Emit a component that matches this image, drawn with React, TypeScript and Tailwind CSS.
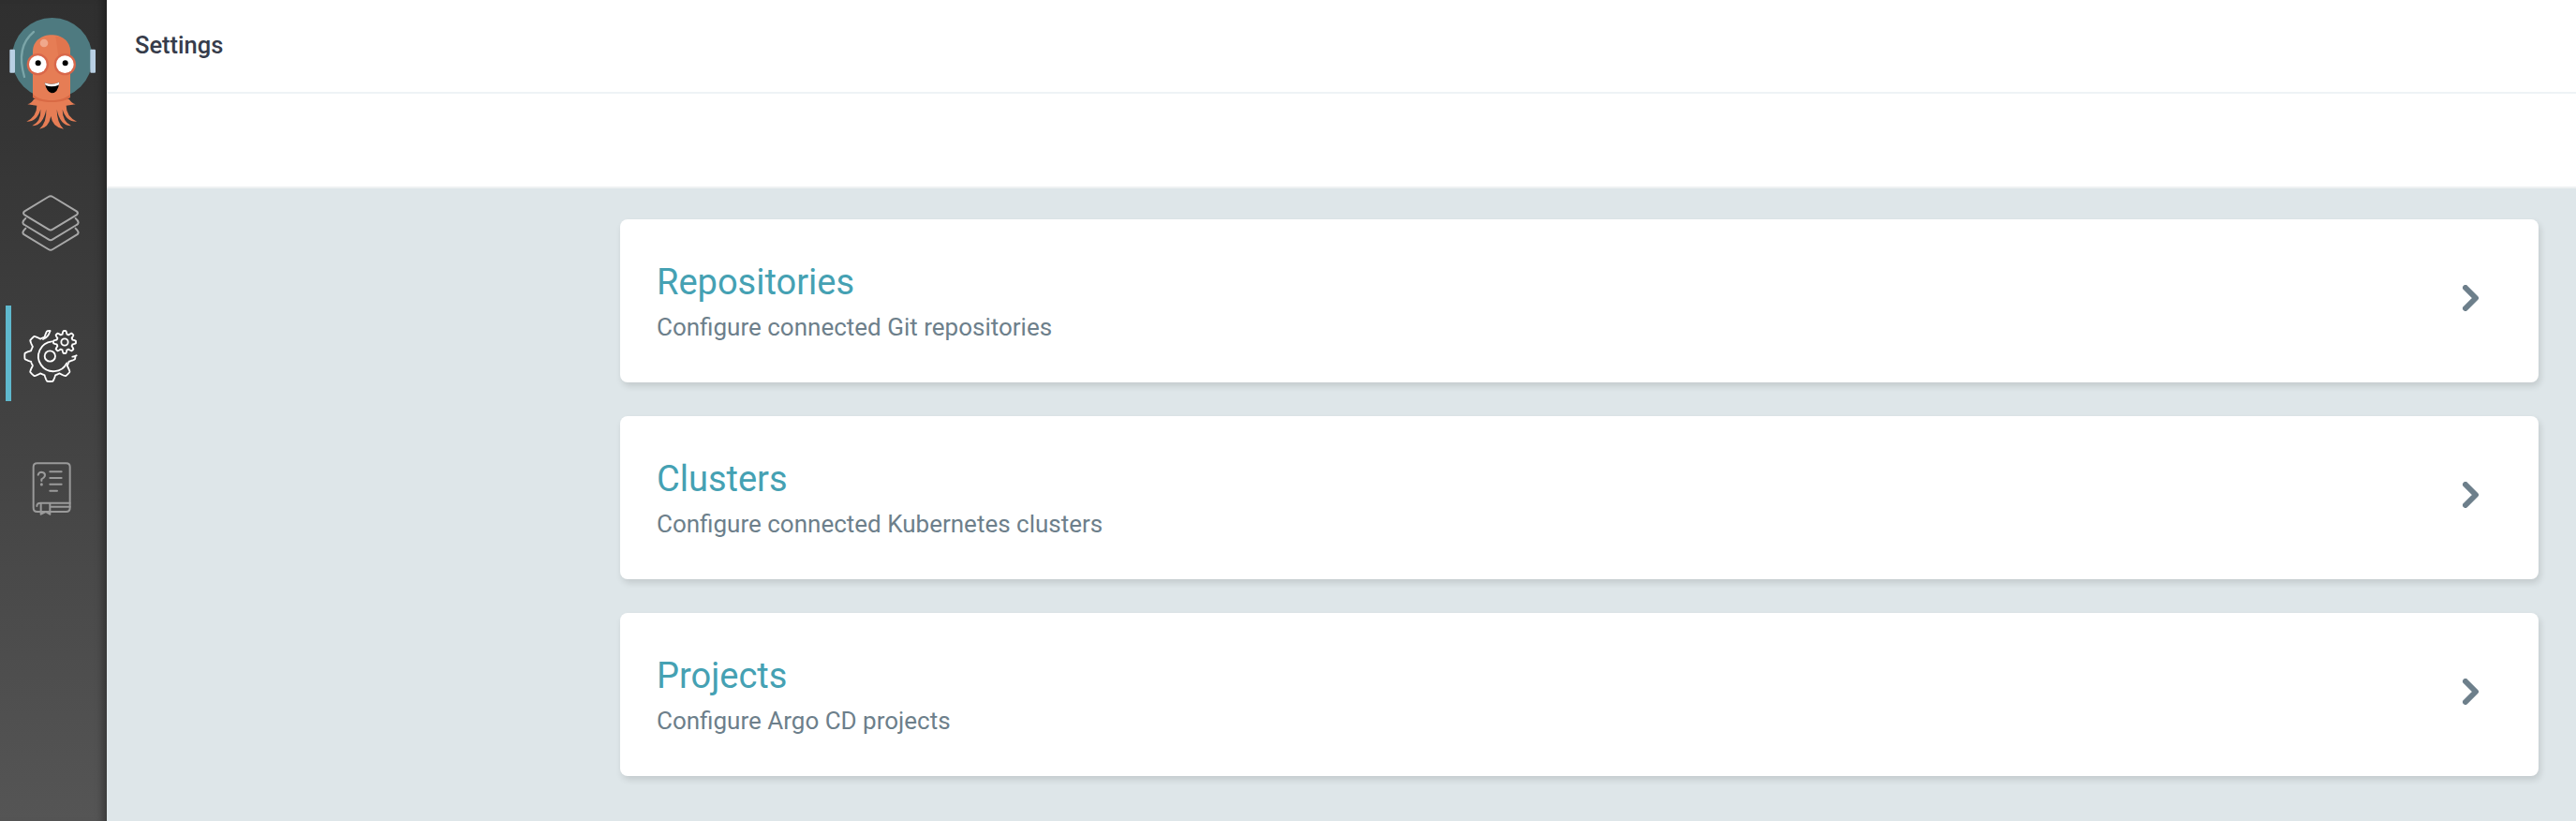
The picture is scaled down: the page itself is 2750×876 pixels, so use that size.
const gearPoints = (cx: number, cy: number, base: number, amp: number, teeth: number, from: number, to: number) => {
  const pts: string[] = [];
  const steps = 240;
  for (let i = 0; i <= steps; i++) {
    const a = from + ((to - from) * i) / steps;
    const wave = Math.max(-1, Math.min(1, Math.cos(teeth * a) * 1.6));
    const r = base + amp * wave;
    pts.push(`${(cx + r * Math.cos(a)).toFixed(1)},${(cy + r * Math.sin(a)).toFixed(1)}`);
  }
  return 'M' + pts.join(' L');
};

function Logo() {
  return (
    <svg viewBox="0 0 342 450" className="block w-[114px] h-[150px] shrink-0">
      <circle cx="167" cy="186" r="129" fill="#4e7a80" />
      <rect x="31" y="158" width="17" height="75" rx="3" fill="#b9d0e4" />
      <rect x="289" y="158" width="17" height="75" rx="3" fill="#b9d0e4" />
      <path d="M108 102 Q50 150 78 246" fill="none" stroke="#7ba5a8" strokeWidth="7" strokeLinecap="round" />
      {/* tentacles */}
      <path
        d="M108 318 Q102 330 88 334 L118 338 Q118 372 85 389 Q118 390 130 350 Q132 388 103 403 Q138 402 148 350 Q150 392 126 413 Q156 410 163 372 Q168 408 204 413 Q182 392 182 350 Q192 402 228 403 Q200 388 200 350 Q212 390 246 389 Q212 372 212 338 L242 334 Q228 330 222 318 Z"
        fill="#e67d55"
      />
      <path d="M105 165 C105 94 225 94 225 165 L225 310 C205 328 125 328 105 310 Z" fill="#e67d55" />
      <path d="M178 116 C208 118 225 138 225 170 L225 200 L190 200 Z" fill="#dd7049" opacity="0.6" />
      <circle cx="141" cy="138" r="13" fill="#f0a88c" />
      <path d="M105 300 C125 328 205 328 225 300 L225 312 C205 332 125 332 105 312 Z" fill="#d96a45" />
      <circle cx="121" cy="206" r="35" fill="#d9674a" />
      <circle cx="208" cy="206" r="35" fill="#d9674a" />
      <circle cx="121" cy="206" r="28" fill="#ffffff" />
      <circle cx="208" cy="206" r="28" fill="#ffffff" />
      <circle cx="122" cy="202" r="9" fill="#000000" />
      <circle cx="209" cy="202" r="9" fill="#000000" />
      <path d="M143 265 Q166 274 190 263 Q186 298 165 298 Q150 296 143 265 Z" fill="#000000" />
      <path d="M143 265 Q166 274 190 263 L188 272 Q166 281 146 273 Z" fill="#ffffff" />
    </svg>
  );
}

function LayersIcon() {
  return (
    <svg viewBox="0 -9 342 306" className="block w-[114px] h-[102px]" fill="none" stroke="#a8a8a8" strokeWidth="6" strokeLinejoin="round" strokeLinecap="round">
      <path d="M155 60 Q162 55 169 60 L245 106 Q253 112 245 118 L169 164 Q162 169 155 164 L79 118 Q71 112 79 106 Z" />
      <path d="M82 129 Q66 143 79 150 L155 196 Q162 201 169 196 L245 150 Q258 143 242 129" />
      <path d="M82 161 Q66 175 79 182 L155 228 Q162 233 169 228 L245 182 Q258 175 242 161" />
    </svg>
  );
}

function SettingsIcon() {
  return (
    <svg viewBox="0 48 342 306" className="block w-[114px] h-[102px]" fill="none" stroke="#ffffff" strokeWidth="5.5" strokeLinejoin="round" strokeLinecap="round">
      <path d={gearPoints(160, 210, 72, 9, 8, 0.02, 4.72)} />
      <path d="M160 130 Q155 150 138 156" />
      <path d="M232 212 Q240 212 245 208" />
      <path d="M166 163 A48 48 0 1 0 214 232" />
      <circle cx="160" cy="210" r="17" />
      <path d={gearPoints(207, 165, 31, 5, 8, 0, 6.29)} />
      <circle cx="207" cy="165" r="11" />
    </svg>
  );
}

function DocsIcon() {
  return (
    <svg viewBox="0 465 342 306" className="block w-[114px] h-[102px]" fill="none" stroke="#9a9a9a" strokeWidth="6" strokeLinejoin="round" strokeLinecap="round">
      <path d="M119 553 H212 Q224 553 224 565 V696 Q224 708 212 708 H119 Q107 708 107 696 V565 Q107 553 119 553 Z" />
      <path d="M122 590 Q124 581 133 581 Q144 582 144 591 Q144 598 133 604 V609" />
      <path d="M133 620 V621" strokeWidth="9" />
      <path d="M160 580 H197 M160 600 H197 M160 620 H197 M160 641 H183" />
      <path d="M224 680 H130 Q118 680 118 690 M224 692 H162" />
      <path d="M131 682 V716 L146 708 L160 716 V682" />
    </svg>
  );
}

const items = [
  { title: 'Repositories', desc: 'Configure connected Git repositories' },
  { title: 'Clusters', desc: 'Configure connected Kubernetes clusters' },
  { title: 'Projects', desc: 'Configure Argo CD projects' },
];

export default function App() {
  return (
    <div className="flex h-[876px] w-[2750px] overflow-hidden bg-[#dee6e9] font-['Roboto',sans-serif]">
      {/* sidebar */}
      <div className="w-[114px] shrink-0 flex flex-col bg-gradient-to-b from-[#2f2f2f] to-[#555555] shadow-[inset_-10px_0_8px_-6px_rgba(0,0,0,0.35)]">
        <Logo />
        <div className="mt-[37px] flex flex-col gap-[37px]">
          <LayersIcon />
          <div className="relative">
            <div className="absolute left-[6px] top-0 h-[102px] w-[6px] bg-[#5fb8cd]" />
            <SettingsIcon />
          </div>
          <DocsIcon />
        </div>
      </div>

      {/* content */}
      <div className="flex-1 flex flex-col">
        <div className="h-[100px] shrink-0 bg-white border-b-2 border-[#eef3f6] pl-[30px] flex items-center">
          <span className="text-[25.5px] leading-[28px] font-medium text-[#363c4a] mb-[3px]">Settings</span>
        </div>
        <div className="h-[101px] shrink-0 bg-white border-b-2 border-[#eef1f2]" />
        <div className="flex flex-col gap-[36px] pt-[33px] pl-[548px] pr-[40px]">
          {items.map((item) => (
            <div key={item.title} className="h-[174px] bg-white rounded-[8px] shadow-[2px_4px_7px_rgba(0,0,0,0.12)] pl-[39px] pr-[63px] flex items-center justify-between">
              <div className="flex flex-col">
                <div className="text-[38px] leading-[44px] text-[#45a1b3]">{item.title}</div>
                <div className="mt-[11px] text-[26px] leading-[30px] text-[#6d7f8b]">{item.desc}</div>
              </div>
              <svg viewBox="0 0 18 28" className="block w-[18px] h-[28px] mb-[6px]" fill="none" stroke="#6d7f8b" strokeWidth="6" strokeLinejoin="round" strokeLinecap="round">
                <path d="M3 3 L14 14 L3 25" />
              </svg>
            </div>
          ))}
        </div>
      </div>
    </div>
  );
}
